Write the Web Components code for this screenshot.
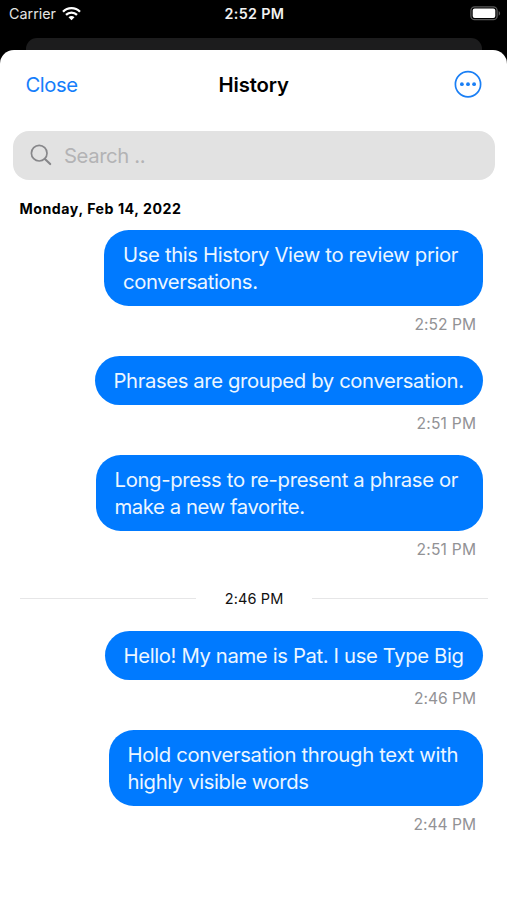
<!DOCTYPE html>
<html lang="en">
<head>
<meta charset="utf-8">
<title>History</title>
<style>
html,body{margin:0;padding:0;background:#000}
body{font-family:Inter,"Liberation Sans",sans-serif;width:507px;height:900px;overflow:hidden}
</style>
</head>
<body>
<history-screen></history-screen>
<script>
const define = (name, html, ready) => customElements.define(name, class extends HTMLElement {
  connectedCallback() {
    if (!this.shadowRoot) this.attachShadow({mode: "open"}).innerHTML = html;
    if (ready) ready(this);
  }
});

/* One line of text whose tracking is set so that it spans its "w" attribute. */
define("text-line", `<style>
:host{display:block;white-space:pre;width:max-content}
span{display:inline-block}
</style><span><slot></slot></span>`, el => {
  const span = el.shadowRoot.querySelector("span");
  const w = parseFloat(el.getAttribute("w"));
  const n = el.textContent.length;
  const natural = span.getBoundingClientRect().width;
  if (w && natural) {
    const track = (w - natural) / (n - 1);
    span.style.letterSpacing = track + "px";
    span.style.marginRight = -track + "px";
  }
});

define("status-bar", `<style>
:host{display:grid;grid-template-columns:1fr auto 1fr;align-items:center;height:28px;padding:0 6px 0 9px;color:#fff;font-size:14.3px;line-height:28px}
.left{display:flex;align-items:center;gap:6px;color:#e4e4e4}
.left svg{margin-top:-2px}
.time{font-weight:600;color:#f2f2f2;margin-left:-1.5px}
.right{display:flex;justify-content:flex-end}
.right svg{margin-top:-2px}
svg{display:block}
</style>
<div class="left"><text-line w="47">Carrier</text-line>
<svg width="19" height="15" viewBox="0 0 19 15" fill="none" stroke="#fff" stroke-width="2.3"><path d="M1 5.7C5.7.8 13.3.8 18 5.7"/><path d="M4 8.9c3.1-3 7.9-3 11 0"/><path d="M9.5 14.2 6.5 11.2c1.7-1.6 4.3-1.6 6 0z" fill="#fff" stroke="none"/></svg></div>
<text-line class="time" w="59.5">2:52 PM</text-line>
<div class="right"><svg width="31" height="15" viewBox="0 0 31 15"><rect x=".9" y=".9" width="26.2" height="12.8" rx="3.8" fill="none" stroke="#5a5a5a" stroke-width="1.3"/><rect x="2.7" y="2.6" width="22.6" height="9.4" rx="2" fill="#fff"/><path d="M28.7 5v4.7c1.9-.8 1.9-3.9 0-4.7z" fill="#5a5a5a"/></svg></div>`);

define("nav-bar", `<style>
:host{display:grid;grid-template-columns:1fr auto 1fr;align-items:center;box-sizing:border-box;height:68px;padding:0 25.5px 0 25.5px;font-size:20.3px;line-height:29px}
.close{color:#157efb}
.title{font-weight:600;color:#000;margin-left:.6px}
svg{display:block;justify-self:end}
</style>
<text-line class="close" w="52.5">Close</text-line>
<text-line class="title" w="70.5">History</text-line>
<svg width="28" height="28" viewBox="0 0 28 28"><circle cx="14" cy="14.2" r="12.6" fill="none" stroke="#1a7ff5" stroke-width="1.7"/><g fill="#1a7ff5"><circle cx="7.9" cy="14.2" r="1.9"/><circle cx="14" cy="14.2" r="1.9"/><circle cx="20.1" cy="14.2" r="1.9"/></g></svg>`);

define("search-field", `<style>
:host{display:flex;align-items:center;gap:12px;box-sizing:border-box;height:49px;margin:12.5px 12.5px 0 13px;padding:0 17px;border-radius:16px;background:#e2e2e2;color:#b3b3b5;font-size:20.3px;line-height:29px}
svg{display:block}
</style>
<svg width="22" height="22" viewBox="0 0 22 22" fill="none" stroke="#87878a" stroke-linecap="round"><circle cx="9.2" cy="9.2" r="7.8" stroke-width="1.7"/><path d="m14.9 14.9 5.3 5.2" stroke-width="2.1"/></svg>
<slot></slot>`);

define("day-heading", `<style>
:host{display:block;margin:19.5px 0 10.5px 19.5px;height:20px;line-height:20px;font-size:14.2px;font-weight:700;color:#000}
</style><slot></slot>`);

define("message-item", `<style>
:host{display:flex;flex-direction:column;align-items:flex-end;padding-right:24.5px}
.bubble{background:#007aff;color:#ecf6ff;border-radius:24.75px;padding:11px 18.5px 11px 18.7px;font-size:20.3px;line-height:27px}
:host([pair]) .bubble{padding-right:24px}
.time{height:50px;box-sizing:border-box;padding:9px 6.5px 0 0;color:#929295;font-size:15.6px;line-height:20px}
</style>
<div class="bubble"><slot></slot></div>
<div class="time"><slot name="time"></slot></div>`);

define("time-divider", `<style>
:host{display:flex;align-items:center;justify-content:center;height:50px;box-sizing:border-box;padding:0 19px 13.5px 20px;color:#111;font-size:14.5px;line-height:20px;gap:29px}
i{flex:1;height:1px;background:#e6e6e7}
</style><i></i><slot></slot><i></i>`);

define("history-screen", `<style>
:host{display:flex;flex-direction:column;height:900px;background:#000}
.behind{height:12px;margin:10px 25px 0 25.5px;background:#1c1c1d;border-radius:11px 11px 0 0}
.sheet{flex:1;background:#fff;border-radius:14px 14px 0 0}
</style>
<status-bar></status-bar>
<div class="behind"></div>
<main class="sheet">
<nav-bar></nav-bar>
<search-field><text-line w="81.5">Search ..</text-line></search-field>
<day-heading><text-line w="161.5">Monday, Feb 14, 2022</text-line></day-heading>
<message-item pair><text-line w="335.5">Use this History View to review prior</text-line><text-line w="135">conversations.</text-line><text-line slot="time" w="61.5">2:52 PM</text-line></message-item>
<message-item><text-line w="350.5">Phrases are grouped by conversation.</text-line><text-line slot="time" w="59.5">2:51 PM</text-line></message-item>
<message-item pair><text-line w="344">Long-press to re-present a phrase or</text-line><text-line w="190.5">make a new favorite.</text-line><text-line slot="time" w="59.5">2:51 PM</text-line></message-item>
<time-divider><text-line w="58.5">2:46 PM</text-line></time-divider>
<message-item><text-line w="340.5">Hello! My name is Pat. I use Type Big</text-line><text-line slot="time" w="62">2:46 PM</text-line></message-item>
<message-item pair><text-line w="331">Hold conversation through text with</text-line><text-line w="181.5">highly visible words</text-line><text-line slot="time" w="62.5">2:44 PM</text-line></message-item>
</main>`);
</script>
</body>
</html>
